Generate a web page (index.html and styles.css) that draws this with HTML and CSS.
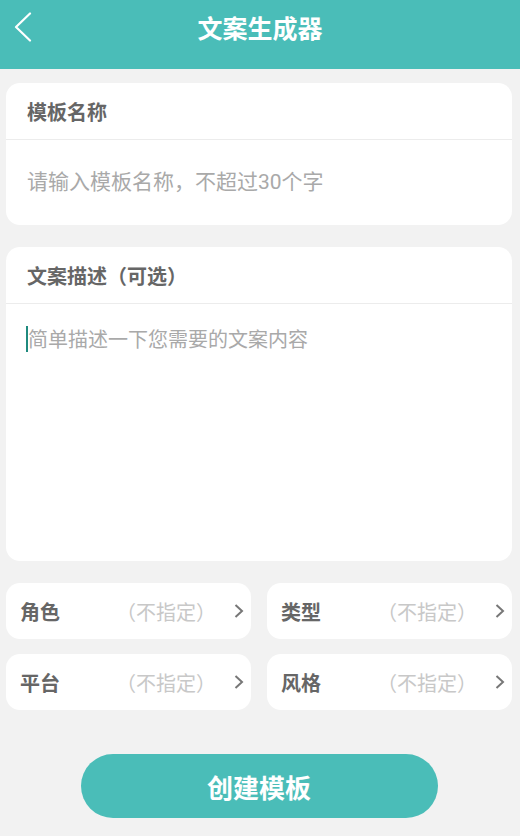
FILE: index.html
```html
<!DOCTYPE html>
<html lang="zh-CN">
<head>
<meta charset="utf-8">
<title>文案生成器</title>
<link rel="stylesheet" href="styles.css">
</head>
<body>
<header class="topbar">
  <div class="back">
    <svg width="18" height="30" viewBox="0 0 18 30"><path d="M16 1.5 L2 15 L16 28.5" fill="none" stroke="#fff" stroke-width="2.2" stroke-linecap="round" stroke-linejoin="round"/></svg>
  </div>
  <h1 class="title">文案生成器</h1>
  <div></div>
</header>
<main class="page">
  <section class="card">
    <div class="card-head">模板名称</div>
    <div class="name-input">请输入模板名称，不超过30个字</div>
  </section>
  <section class="card">
    <div class="card-head">文案描述（可选）</div>
    <div class="desc-input"><span class="caret"></span><span class="ph">简单描述一下您需要的文案内容</span></div>
  </section>
  <section class="options">
    <div class="opt"><span class="opt-label">角色</span><span class="opt-value">（不指定）</span><svg class="chev" width="10" height="16" viewBox="0 0 10 16"><path d="M1.5 2 L8 8 L1.5 14" fill="none" stroke="#777" stroke-width="2"/></svg></div>
    <div class="opt"><span class="opt-label">类型</span><span class="opt-value">（不指定）</span><svg class="chev" width="10" height="16" viewBox="0 0 10 16"><path d="M1.5 2 L8 8 L1.5 14" fill="none" stroke="#777" stroke-width="2"/></svg></div>
    <div class="opt"><span class="opt-label">平台</span><span class="opt-value">（不指定）</span><svg class="chev" width="10" height="16" viewBox="0 0 10 16"><path d="M1.5 2 L8 8 L1.5 14" fill="none" stroke="#777" stroke-width="2"/></svg></div>
    <div class="opt"><span class="opt-label">风格</span><span class="opt-value">（不指定）</span><svg class="chev" width="10" height="16" viewBox="0 0 10 16"><path d="M1.5 2 L8 8 L1.5 14" fill="none" stroke="#777" stroke-width="2"/></svg></div>
  </section>
  <button class="create">创建模板</button>
</main>
</body>
</html>
```
FILE: styles.css
```css
* { box-sizing: border-box; }
html, body { margin: 0; padding: 0; }
body {
  width: 520px;
  height: 836px;
  overflow: hidden;
  background: #f2f2f2;
  font-family: "Noto Sans CJK SC", "Noto Sans", sans-serif;
}
.topbar {
  height: 69px;
  background: #4abdb8;
  display: grid;
  grid-template-columns: 1fr auto 1fr;
  align-items: start;
}
.back {
  height: 54px;
  display: flex;
  align-items: center;
  padding-left: 14px;
}
.back svg { display: block; }
.title {
  margin: 0;
  height: 54px;
  line-height: 54px;
  font-size: 25px;
  font-weight: 700;
  color: #fff;
}
.page {
  padding: 14px 8px 0 6px;
  display: flex;
  flex-direction: column;
}
.card {
  background: #fff;
  border-radius: 14px;
  margin-bottom: 22px;
}
.card-head {
  height: 57px;
  line-height: 57px;
  padding-left: 21px;
  font-size: 20px;
  font-weight: 700;
  color: #666;
  border-bottom: 1px solid #ececec;
}
.name-input {
  height: 85px;
  line-height: 85px;
  padding-left: 21px;
  font-family: "Roboto", "Noto Sans CJK SC", sans-serif;
  font-size: 21px;
  color: #a9a9a9;
}
.desc-input {
  height: 257px;
  padding: 22px 0 0 20px;
  display: flex;
  align-items: center;
  align-content: flex-start;
  flex-wrap: wrap;
  font-size: 20px;
  line-height: 26px;
  color: #a9a9a9;
}
.caret {
  width: 2px;
  height: 26px;
  background: #1f8a7e;
}
.options {
  display: grid;
  grid-template-columns: 1fr 1fr;
  column-gap: 16px;
  row-gap: 15px;
}
.opt {
  height: 56px;
  background: #fff;
  border-radius: 14px;
  display: flex;
  align-items: center;
  padding: 0 7px 0 14px;
}
.opt-label {
  font-size: 20px;
  font-weight: 700;
  color: #666;
}
.opt-value {
  margin-left: auto;
  margin-right: 18px;
  font-size: 20px;
  color: #c8c8c8;
}
.chev { display: block; }
.create {
  margin: 44px auto 0;
  width: 357px;
  height: 64px;
  border: none;
  border-radius: 32px;
  background: #4abdb8;
  color: #fff;
  font-family: "Noto Sans CJK SC", "Noto Sans", sans-serif;
  font-size: 26px;
  font-weight: 700;
  padding: 0;
}
```
